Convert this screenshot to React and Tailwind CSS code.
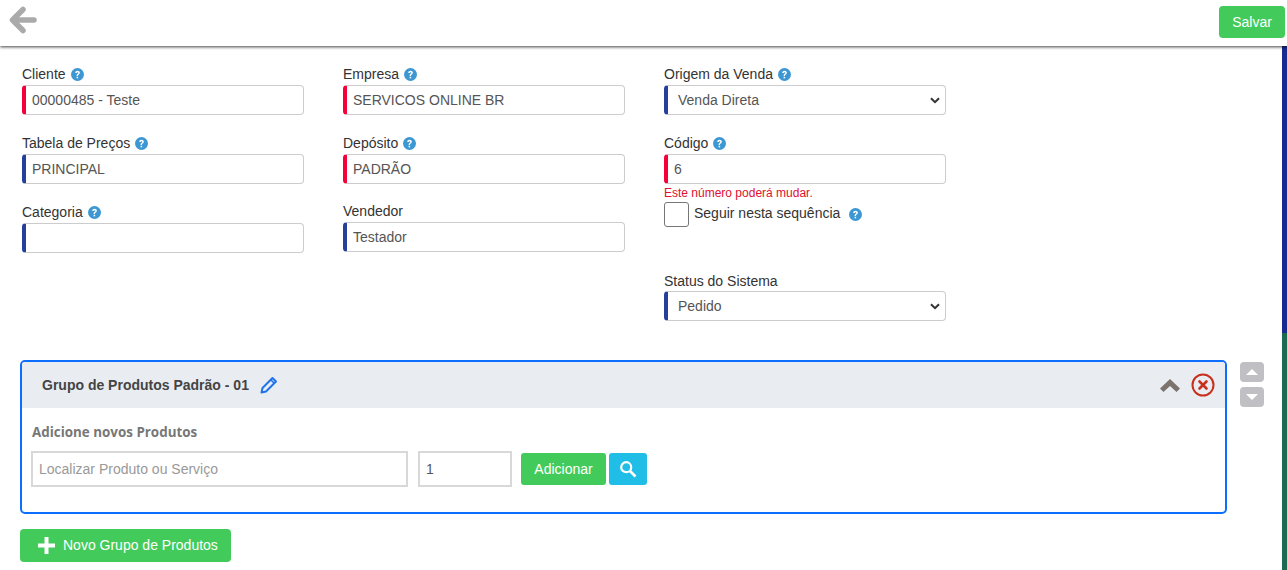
import React from "react"

const Help = () => (
  <svg width="13" height="13" viewBox="0 0 16 16" className="shrink-0">
    <circle cx="8" cy="8" r="8" fill="#3c97d3" />
    <path d="M5.2 6.2c0-1.7 1.2-2.7 2.9-2.7 1.6 0 2.8 1 2.8 2.4 0 1.1-.6 1.7-1.4 2.2-.7.4-.9.7-.9 1.3v.3H6.9v-.5c0-1 .4-1.6 1.2-2.1.6-.4.9-.6.9-1.1 0-.5-.4-.8-.9-.8-.6 0-1 .4-1 1z" fill="#fff" />
    <rect x="6.9" y="10.8" width="1.9" height="1.9" fill="#fff" />
  </svg>
)

const Label = ({ text, help = true }) => (
  <div className="flex items-center gap-[5px] h-[16px] mb-[3px] text-[14px] leading-[16px] text-[#333]">
    <span>{text}</span>
    {help && <Help />}
  </div>
)

const Field = ({ label, value, color = "red", help, tight }) => (
  <div className={tight ? "mb-[19px]" : "mb-[20px]"}>
    <Label text={label} help={help} />
    <div className={`h-[30px] bg-white border border-[#ccc] border-l-4 rounded-[4px] flex items-center pl-[6px] text-[14px] text-[#555] ${color === "red" ? "border-l-[#f5003a]" : "border-l-[#25409c]"}`}>
      {value}
    </div>
  </div>
)

const SelectField = ({ label, value, help }) => (
  <div>
    <Label text={label} help={help} />
    <div className="h-[30px] bg-white border border-[#ccc] border-l-4 border-l-[#25409c] rounded-[4px] flex items-center justify-between pl-[10px] pr-[5px] text-[14px] text-[#555]">
      <span>{value}</span>
      <svg width="10" height="7" viewBox="0 0 10 7">
        <path d="M1 1.2l4 4 4-4" fill="none" stroke="#333" strokeWidth="2" />
      </svg>
    </div>
  </div>
)

export default function App() {
  return (
    <div className="w-[1287px] h-[570px] overflow-hidden bg-white flex flex-col font-['Liberation_Sans',Arial,sans-serif]">
      {/* barra de cima */}
      <div className="h-[46px] shrink-0 flex items-center justify-between pl-[9px] pr-[2px] bg-white shadow-[0_1px_3px_rgba(0,0,0,0.75)] relative z-10">
        <svg width="28" height="28" viewBox="0 0 28 28" className="-mt-[6px]">
          <path d="M14 3.5L3.5 14 14 24.5" fill="none" stroke="#aaa" strokeWidth="5.5" strokeLinecap="round" strokeLinejoin="round" />
          <path d="M5 14h20" fill="none" stroke="#aaa" strokeWidth="5.5" strokeLinecap="round" />
        </svg>
        <button className="w-[66px] h-[32px] -mt-[2px] bg-[#42cb5a] rounded-[4px] text-white text-[14px]">Salvar</button>
      </div>

      <div className="flex-1 flex min-h-0">
        <div className="flex-1 min-w-0 flex flex-col">
          {/* formulario */}
          <div className="flex gap-[39px] pl-[22px] pt-[20px]">
            <div className="w-[282px]">
              <Field label="Cliente" value="00000485 - Teste" />
              <Field label="Tabela de Preços" value="PRINCIPAL" color="blue" />
              <Field label="Categoria" value="" color="blue" />
            </div>
            <div className="w-[282px]">
              <Field label="Empresa" value="SERVICOS ONLINE BR" />
              <Field label="Depósito" value="PADRÃO" tight />
              <Field label="Vendedor" value="Testador" color="blue" help={false} />
            </div>
            <div className="w-[282px]">
              <div className="mb-[20px]">
                <SelectField label="Origem da Venda" value="Venda Direta" />
              </div>
              <Label text="Código" />
              <div className="h-[30px] bg-white border border-[#ccc] border-l-4 border-l-[#f5003a] rounded-[4px] flex items-center pl-[6px] text-[14px] text-[#555]">6</div>
              <div className="text-[12px] leading-[14px] mt-[2px] text-[#e0102f]">Este número poderá mudar.</div>
              <div className="flex items-start mt-[2px] h-[25px]">
                <div className="w-[25px] h-[25px] border border-[#767676] rounded-[3px] bg-white" />
                <span className="ml-[5px] mt-[1px] text-[14px] leading-[20px] text-[#333]">Seguir nesta sequência</span>
                <span className="ml-[9px] mt-[6px]"><Help /></span>
              </div>
              <div className="mt-[46px]">
                <div className="flex items-center h-[16px] mb-[2px] text-[14px] leading-[16px] text-[#333]">Status do Sistema</div>
                <div className="h-[30px] bg-white border border-[#ccc] border-l-4 border-l-[#25409c] rounded-[4px] flex items-center justify-between pl-[10px] pr-[5px] text-[14px] text-[#555]">
                  <span>Pedido</span>
                  <svg width="10" height="7" viewBox="0 0 10 7">
                    <path d="M1 1.2l4 4 4-4" fill="none" stroke="#333" strokeWidth="2" />
                  </svg>
                </div>
              </div>
            </div>
          </div>

          {/* grupo de produtos */}
          <div className="flex items-start pl-[20px] mt-[39px]">
            <div className="w-[1207px] h-[154px] border-2 border-[#0d6efd] rounded-[5px] overflow-hidden">
              <div className="h-[46px] bg-[#e9edf2] flex items-center justify-between pl-[20px] pr-[10px]">
                <div className="flex items-center gap-[11px]">
                  <span className="text-[14px] font-bold text-[#444]">Grupo de Produtos Padrão - 01</span>
                  <svg width="18" height="18" viewBox="0 0 18 18">
                    <path d="M1.5 16.5l1-4.5L12.5 2 16 5.5 6 15.5z" fill="none" stroke="#1e73e8" strokeWidth="2" strokeLinejoin="round" />
                    <path d="M10.8 3.8l3.4 3.4" stroke="#1e73e8" strokeWidth="1.6" />
                  </svg>
                </div>
                <div className="flex items-center gap-[11px]">
                  <svg width="20" height="13" viewBox="0 0 20 13">
                    <path d="M10 0L20 9.5 16.5 13 10 7 3.5 13 0 9.5z" fill="#7c746c" />
                  </svg>
                  <svg width="24" height="24" viewBox="0 0 24 24">
                    <circle cx="12" cy="12" r="10.5" fill="none" stroke="#c8301e" strokeWidth="2" />
                    <path d="M8.5 8.5l7 7M15.5 8.5l-7 7" stroke="#c8301e" strokeWidth="2.6" strokeLinecap="round" />
                  </svg>
                </div>
              </div>
              <div className="pl-[10px] pt-[17px]">
                <div className="text-[13.4px] leading-[15px] font-bold text-[#777] font-['Open_Sans',sans-serif]">Adicione novos Produtos</div>
                <div className="flex items-center mt-[11px] -ml-[1px]">
                  <div className="w-[377px] h-[36px] border-2 border-[#d8d8d8] flex items-center pl-[6px] text-[14px] text-[#999]">Localizar Produto ou Serviço</div>
                  <div className="w-[94px] h-[36px] ml-[10px] border-2 border-[#d8d8d8] flex items-center pl-[6px] text-[14px] text-[#555]">1</div>
                  <button className="w-[85px] h-[32px] ml-[9px] bg-[#42cb5a] rounded-[3px] text-white text-[14px]">Adicionar</button>
                  <button className="w-[38px] h-[32px] ml-[3px] bg-[#20bde6] rounded-[3px] flex items-center justify-center">
                    <svg width="18" height="18" viewBox="0 0 18 18">
                      <circle cx="7.2" cy="7.2" r="5" fill="none" stroke="#fff" strokeWidth="2.2" />
                      <path d="M11 11l5.5 5.5" stroke="#fff" strokeWidth="2.6" />
                    </svg>
                  </button>
                </div>
              </div>
            </div>
            <div className="ml-[13px] mt-[2px] flex flex-col gap-[5px]">
              <div className="w-[24px] h-[20px] rounded-[4px] bg-[#c0c0c4] flex items-center justify-center">
                <svg width="12" height="6" viewBox="0 0 12 6"><path d="M6 0l6 6H0z" fill="#fff" /></svg>
              </div>
              <div className="w-[24px] h-[20px] rounded-[4px] bg-[#c0c0c4] flex items-center justify-center">
                <svg width="12" height="6" viewBox="0 0 12 6"><path d="M0 0h12L6 6z" fill="#fff" /></svg>
              </div>
            </div>
          </div>

          <div className="pl-[20px] mt-[15px]">
            <button className="w-[211px] h-[33px] bg-[#42cb5a] rounded-[4px] text-white text-[14px] flex items-center pl-[18px] gap-[8px]">
              <svg width="17" height="17" viewBox="0 0 17 17"><path d="M6.5 0h4v6.5H17v4h-6.5V17h-4v-6.5H0v-4h6.5z" fill="#fff" /></svg>
              Novo Grupo de Produtos
            </button>
          </div>
        </div>

        {/* faixa lateral */}
        <div className="w-[5px] shrink-0 flex flex-col">
          <div className="h-[287px] bg-[#1a2a8e]" />
          <div className="flex-1 bg-[#1b6b52]" />
        </div>
      </div>
    </div>
  )
}
